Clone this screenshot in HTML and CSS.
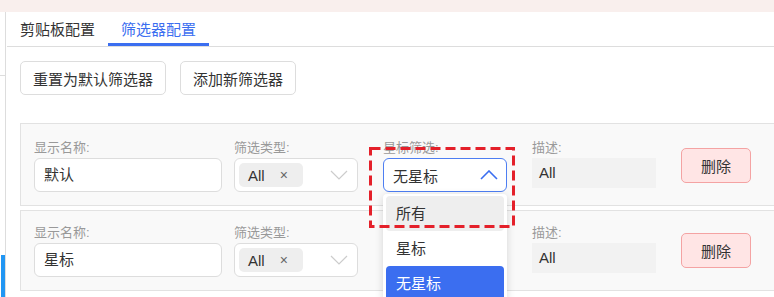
FILE: index.html
```html
<!DOCTYPE html>
<html lang="zh-CN">
<head>
    <meta charset="UTF-8">
    <title>筛选器配置</title>
    <link rel="stylesheet" href="styles.css">
</head>
<body>

    <div class="topbar"></div>

    <div class="layout">
        <div class="sidebar">
            <div class="side-sep"></div>
            <div class="side-active"></div>
        </div>

        <div class="main">
            <div class="tabs">
                <div class="tab">剪贴板配置</div>
                <div class="tab active">筛选器配置</div>
            </div>

            <div class="actions">
                <button class="btn">重置为默认筛选器</button>
                <button class="btn">添加新筛选器</button>
            </div>

            <div class="filter-card">
                <div class="field">
                    <label>显示名称:</label>
                    <div class="input">默认</div>
                </div>
                <div class="field">
                    <label>筛选类型:</label>
                    <div class="select">
                        <span class="tag">All <span class="tag-x">×</span></span>
                        <svg class="chev" width="18" height="10" viewBox="0 0 18 10"><path d="M1 1 L9 9 L17 1" fill="none" stroke="#ccc" stroke-width="1.2"/></svg>
                    </div>
                </div>
                <div class="field star-field">
                    <label>星标筛选:</label>
                    <div class="select open">
                        <span class="value">无星标</span>
                        <svg class="chev" width="18" height="10" viewBox="0 0 18 10"><path d="M1 9 L9 1 L17 9" fill="none" stroke="#3b6ef0" stroke-width="1.6"/></svg>
                    </div>
                    <div class="dropdown">
                        <div class="option hover">所有</div>
                        <div class="option">星标</div>
                        <div class="option selected">无星标</div>
                    </div>
                    <svg class="mark" width="146" height="81" viewBox="0 0 146 81"><rect x="1.5" y="1.5" width="143" height="78" fill="none" stroke="#e4202a" stroke-width="3" stroke-dasharray="10 5"/></svg>
                </div>
                <div class="field">
                    <label>描述:</label>
                    <div class="desc">All</div>
                </div>
                <button class="btn-delete">删除</button>
            </div>

            <div class="filter-card">
                <div class="field">
                    <label>显示名称:</label>
                    <div class="input">星标</div>
                </div>
                <div class="field">
                    <label>筛选类型:</label>
                    <div class="select">
                        <span class="tag">All <span class="tag-x">×</span></span>
                        <svg class="chev" width="18" height="10" viewBox="0 0 18 10"><path d="M1 1 L9 9 L17 1" fill="none" stroke="#ccc" stroke-width="1.2"/></svg>
                    </div>
                </div>
                <div class="field">
                    <label>星标筛选:</label>
                    <div class="select"></div>
                </div>
                <div class="field">
                    <label>描述:</label>
                    <div class="desc">All</div>
                </div>
                <button class="btn-delete">删除</button>
            </div>
        </div>
    </div>

</body>
</html>
```

FILE: styles.css
```css
body {
    margin: 0;
    padding: 0;
    font-family: "Liberation Sans", "Noto Sans CJK SC", sans-serif;
    color: #333;
    background: #fff;
    overflow: hidden;
}

.topbar {
    height: 12px;
    background: #f9efed;
}

.layout {
    display: flex;
    height: 285px;
}

.sidebar {
    position: relative;
    width: 5px;
    border-right: 1px solid #ddd;
}

.side-sep {
    position: absolute;
    left: 0;
    top: 63px;
    width: 5px;
    height: 1px;
    background: #ddd;
}

.side-active {
    position: absolute;
    left: 1px;
    top: 243px;
    bottom: 0;
    width: 4px;
    background: #2196f3;
}

.main {
    flex: 1;
    margin-left: 1px;
    overflow: hidden;
}

.tabs {
    display: flex;
    border-bottom: 1px solid #ddd;
}

.tab {
    padding: 8px 13px 3px;
    line-height: 20px;
    font-size: 15px;
    border-bottom: 3px solid transparent;
}

.tab.active {
    color: #3b6ef0;
    border-bottom-color: #3b6ef0;
}

.actions {
    display: flex;
    gap: 14px;
    padding: 14px 13px 0;
}

.btn {
    height: 34px;
    padding: 0 12px;
    font-family: inherit;
    font-size: 15px;
    color: #333;
    background: #fff;
    border: 1px solid #ddd;
    border-radius: 5px;
}

.filter-card {
    display: grid;
    grid-template-columns: 200px 149px 149px 149px 70px;
    align-items: center;
    width: 740px;
    margin-left: 13px;
    padding: 15px 13px 13px;
    background: #f9f9f9;
    border: 1px solid #e2e2e2;
}

.actions + .filter-card {
    margin-top: 28px;
}

.filter-card + .filter-card {
    margin-top: 4px;
    padding-top: 13px;
}

.field {
    position: relative;
}

.field label {
    display: block;
    font-size: 13px;
    line-height: 18px;
    color: #999;
    margin-bottom: 1px;
}

.input {
    box-sizing: border-box;
    width: 188px;
    height: 34px;
    padding: 0 9px;
    line-height: 32px;
    font-size: 15px;
    background: #fff;
    border: 1px solid #ddd;
    border-radius: 6px;
}

.select {
    box-sizing: border-box;
    display: flex;
    align-items: center;
    justify-content: space-between;
    width: 124px;
    height: 34px;
    padding: 0 9px 0 4px;
    background: #fff;
    border: 1px solid #ddd;
    border-radius: 6px;
}

.select .value {
    padding-left: 5px;
    font-size: 15px;
}

.select.open {
    border-color: #4d7ef2;
    padding-right: 8px;
}

.tag {
    display: inline-flex;
    align-items: center;
    height: 24px;
    width: 64px;
    box-sizing: border-box;
    padding-left: 9px;
    font-size: 15px;
    background: #eee;
    border-radius: 5px;
}

.tag-x {
    margin-left: 15px;
    font-size: 14px;
    color: #666;
}

.desc {
    box-sizing: border-box;
    width: 124px;
    height: 30px;
    margin-bottom: 4px;
    padding-left: 7px;
    line-height: 30px;
    font-size: 15px;
    background: #f2f2f2;
}

.btn-delete {
    width: 70px;
    height: 35px;
    font-family: inherit;
    font-size: 15px;
    color: #333;
    background: #ffe5e5;
    border: 1px solid #f4a3a3;
    border-radius: 5px;
}

.dropdown {
    position: absolute;
    left: 0;
    top: 55px;
    z-index: 5;
    width: 124px;
    padding: 2px 3px;
    box-sizing: border-box;
    background: #fff;
    border-radius: 4px;
    box-shadow: 0 2px 8px rgba(0, 0, 0, 0.15);
}

.option {
    height: 35px;
    padding-left: 10px;
    line-height: 35px;
    font-size: 15px;
    border-radius: 4px;
}

.option.hover {
    background: #eee;
}

.option.selected {
    color: #fff;
    background: #3b6ef0;
}

.mark {
    position: absolute;
    left: -14px;
    top: 8px;
    z-index: 6;
}
```
